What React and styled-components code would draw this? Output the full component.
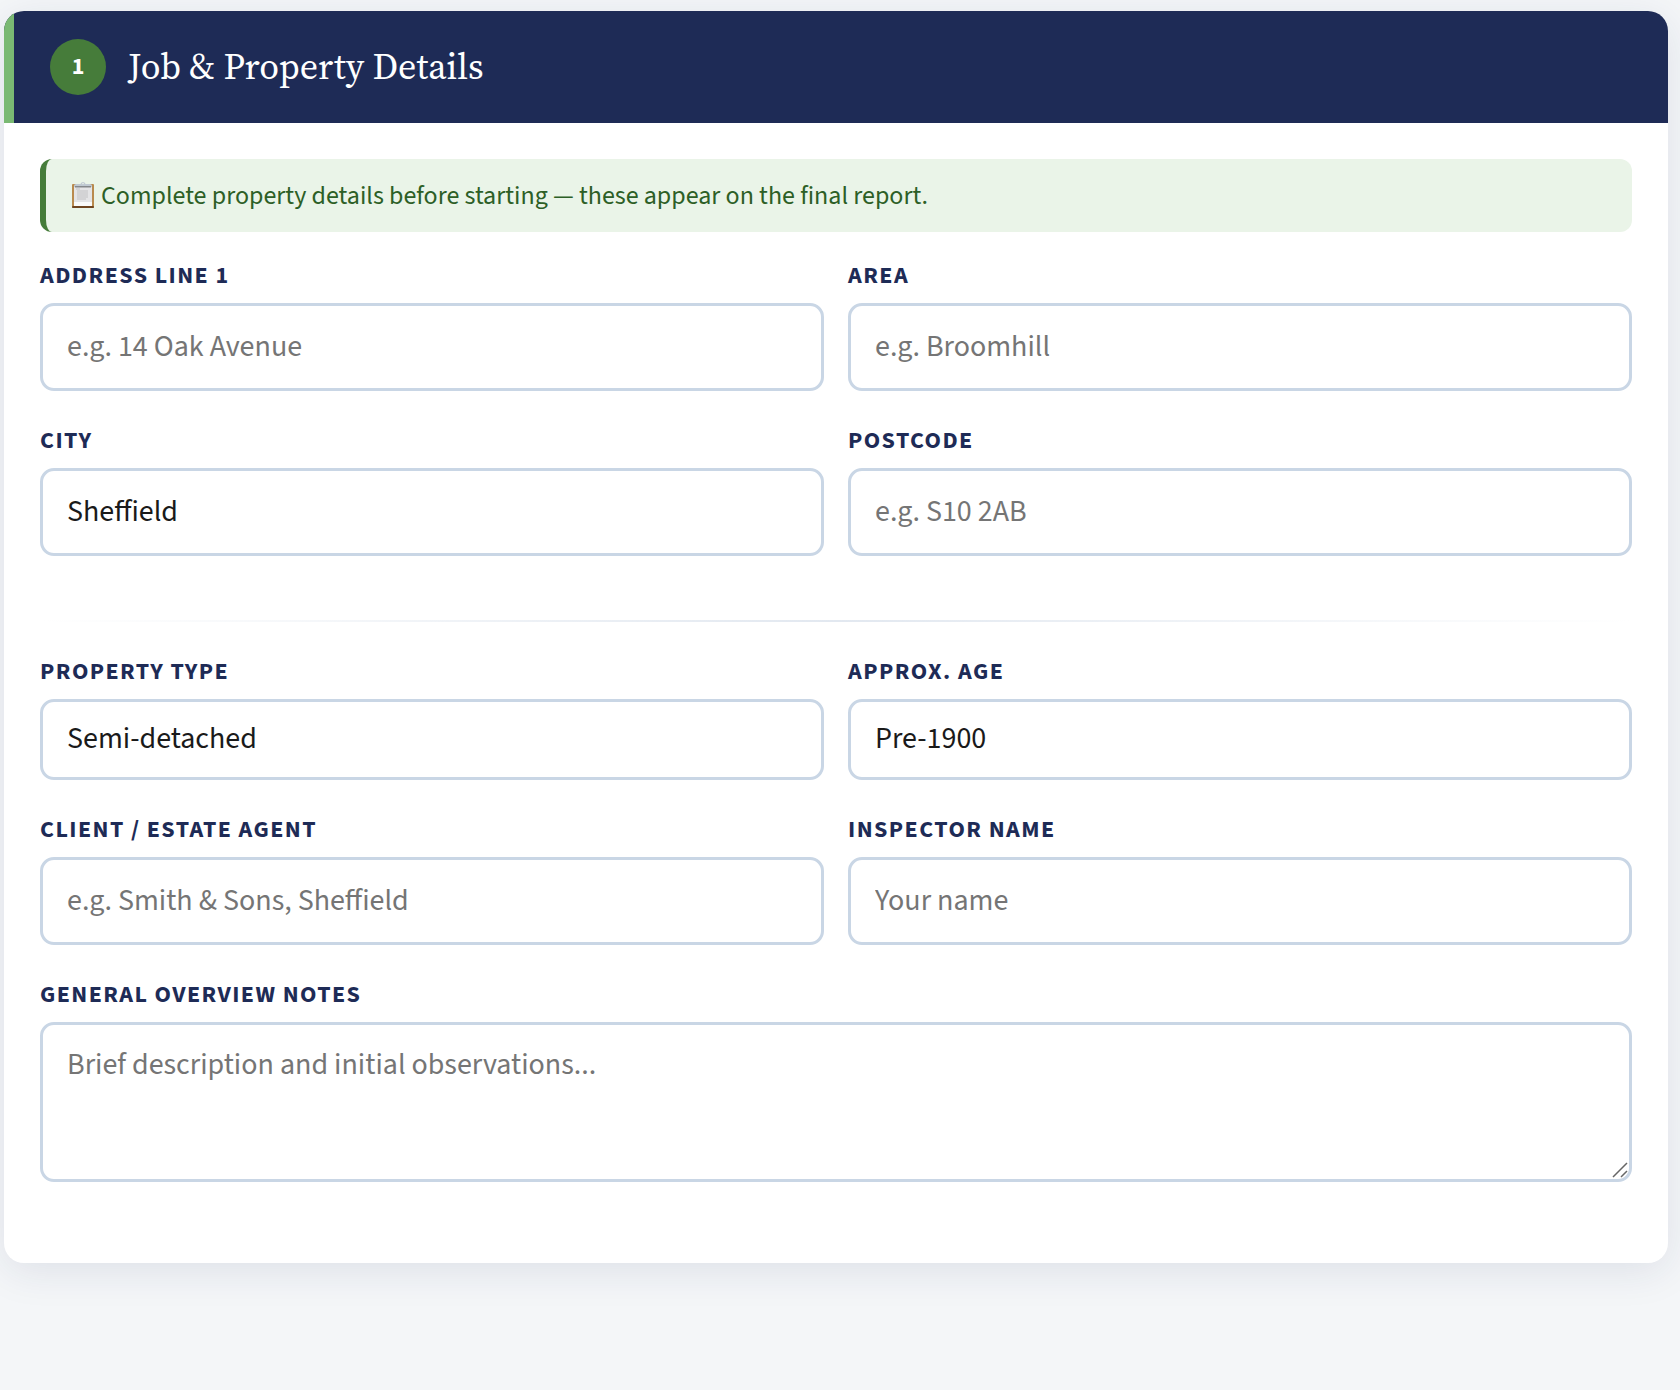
import React, { useState } from 'react';
import styled, { createGlobalStyle } from 'styled-components';

const GlobalStyle = createGlobalStyle`
  * {
    box-sizing: border-box;
  }
  body {
    margin: 0;
    background: #f4f6f8;
    color: #1a1a1a;
    font-family: 'Source Sans 3', 'Noto Sans CJK SC', sans-serif;
  }
`;

const Page = styled.main`
  padding: 11px 12px 60px 4px;
`;

const Card = styled.section`
  background: #fff;
  border-radius: 20px;
  box-shadow: 0 8px 40px rgba(30, 43, 86, 0.1);
  overflow: hidden;
`;

const CardHeader = styled.header`
  display: flex;
  align-items: center;
  gap: 22px;
  padding: 28px 36px;
  background: #1e2b56;
  border-left: 10px solid #7ab973;
`;

const StepNumber = styled.span`
  display: flex;
  align-items: center;
  justify-content: center;
  width: 56px;
  height: 56px;
  border-radius: 50%;
  background: #467c3a;
  color: #fff;
  font-size: 24px;
  font-weight: 700;
  line-height: 32px;
`;

const Title = styled.h2`
  margin: 0;
  color: #fff;
  font-family: 'Source Serif 4', 'Liberation Serif', serif;
  font-size: 36px;
  font-weight: 400;
  line-height: 48px;
`;

const CardBody = styled.form`
  padding: 36px 36px 81px;
`;

const Note = styled.p`
  display: flex;
  align-items: center;
  gap: 7px;
  margin: 0 0 30px;
  padding: 18px 26px;
  background: #eaf4e8;
  border-left: 6px solid #467c3a;
  border-radius: 12px;
  color: #2d5f26;
  font-size: 26px;
  line-height: 37px;
`;

const Fields = styled.div`
  display: grid;
  grid-template-columns: 1fr 1fr;
  gap: 36px 24px;
`;

const Field = styled.div`
  position: relative;
  display: flex;
  flex-direction: column;
  grid-column: ${({ $wide }) => ($wide ? '1 / -1' : 'auto')};
`;

const Label = styled.label`
  margin-bottom: 14px;
  color: #1e2b56;
  font-size: 24px;
  font-weight: 700;
  letter-spacing: 0.06em;
  line-height: 27px;
  text-transform: uppercase;
`;

const Input = styled.input`
  width: 100%;
  height: 88px;
  padding: 0 24px 2px;
  background: #fff;
  border: 3px solid #c9d6e5;
  border-radius: 14px;
  color: #1a1a1a;
  font-family: inherit;
  font-size: 30px;
  line-height: 40px;
  outline: none;
  &::placeholder {
    color: #757575;
  }
  &:focus {
    border-color: #467c3a;
  }
`;

const Select = styled(Input)`
  height: 81px;
  appearance: none;
`;

const TextArea = styled(Input)`
  display: block;
  height: 160px;
  padding: 20px 24px;
  resize: vertical;
  &::-webkit-resizer {
    background: transparent;
  }
`;

const Grip = styled.svg`
  position: absolute;
  right: 4px;
  bottom: 4px;
  pointer-events: none;
`;

const Divider = styled.hr`
  grid-column: 1 / -1;
  width: 100%;
  height: 2px;
  margin: 28px 0 0;
  border: 0;
  background: linear-gradient(90deg, transparent, #e2e8f0, transparent);
`;

function ClipboardIcon() {
  return (
    <svg width="22" height="28" viewBox="0 0 22 28" aria-hidden="true">
      <rect x="0" y="2" width="22" height="24" rx="1" fill="#b98a4e" />
      <rect x="0" y="24" width="22" height="2" rx="1" fill="#6f4520" />
      <rect x="2" y="4" width="18" height="20" fill="#e4e4e6" />
      <path d="M2 20h18v4H2z" fill="#fafafa" />
      <path d="M4 7h4M5 9h11M5 11h11M5 13h11M5 15h11M5 17h9" stroke="#d3d3d5" strokeWidth="2" />
      <path d="M2 5V3.500Q2 2 4 2H8Q9 2 9 1Q10 0 11 0Q12 0 13 1Q13 2 14 2H18Q20 2 20 3.500V5Z" fill="#c0c9d2" />
      <path d="M3 4h16v1.500H3z" fill="#85888c" />
      <circle cx="11" cy="1.500" r="0.800" fill="#eaf4e8" />
    </svg>
  );
}

const addressFields = [
  { id: 'address', label: 'Address Line 1', placeholder: 'e.g. 14 Oak Avenue' },
  { id: 'area', label: 'Area', placeholder: 'e.g. Broomhill' },
  { id: 'city', label: 'City' },
  { id: 'postcode', label: 'Postcode', placeholder: 'e.g. S10 2AB' },
];

const propertyFields = [
  { id: 'type', label: 'Property Type', options: ['Semi-detached', 'Detached', 'Terraced', 'Flat'] },
  { id: 'age', label: 'Approx. Age', options: ['Pre-1900', '1900-1945', '1945-2000', 'Post-2000'] },
  { id: 'client', label: 'Client / Estate Agent', placeholder: 'e.g. Smith & Sons, Sheffield' },
  { id: 'inspector', label: 'Inspector Name', placeholder: 'Your name' },
];

function FormField({ field, value, onChange }) {
  const { id, label, placeholder, options } = field;

  return (
    <Field>
      <Label htmlFor={id}>{label}</Label>
      {options ? (
        <Select as="select" id={id} value={value} onChange={onChange}>
          {options.map((option) => (
            <option key={option}>{option}</option>
          ))}
        </Select>
      ) : (
        <Input id={id} type="text" placeholder={placeholder} value={value} onChange={onChange} />
      )}
    </Field>
  );
}

function App() {
  const [values, setValues] = useState({
    city: 'Sheffield',
    type: 'Semi-detached',
    age: 'Pre-1900',
  });

  const handleChange = (id) => (e) => {
    setValues({ ...values, [id]: e.target.value });
  };

  const renderField = (field) => (
    <FormField
      key={field.id}
      field={field}
      value={values[field.id] || ''}
      onChange={handleChange(field.id)}
    />
  );

  return (
    <Page>
      <GlobalStyle />
      <Card>
        <CardHeader>
          <StepNumber>1</StepNumber>
          <Title>Job &amp; Property Details</Title>
        </CardHeader>
        <CardBody>
          <Note>
            <ClipboardIcon />
            Complete property details before starting — these appear on the final report.
          </Note>
          <Fields>
            {addressFields.map(renderField)}
            <Divider />
            {propertyFields.map(renderField)}
            <Field $wide>
              <Label htmlFor="notes">General Overview Notes</Label>
              <TextArea
                as="textarea"
                id="notes"
                placeholder="Brief description and initial observations..."
                value={values.notes || ''}
                onChange={handleChange('notes')}
              />
              <Grip width="16" height="16" viewBox="0 0 16 16" fill="none" stroke="#666" strokeWidth="1.500">
                <path d="M1 15 15 1M9 15l6-6" />
              </Grip>
            </Field>
          </Fields>
        </CardBody>
      </Card>
    </Page>
  );
}

export default App;
